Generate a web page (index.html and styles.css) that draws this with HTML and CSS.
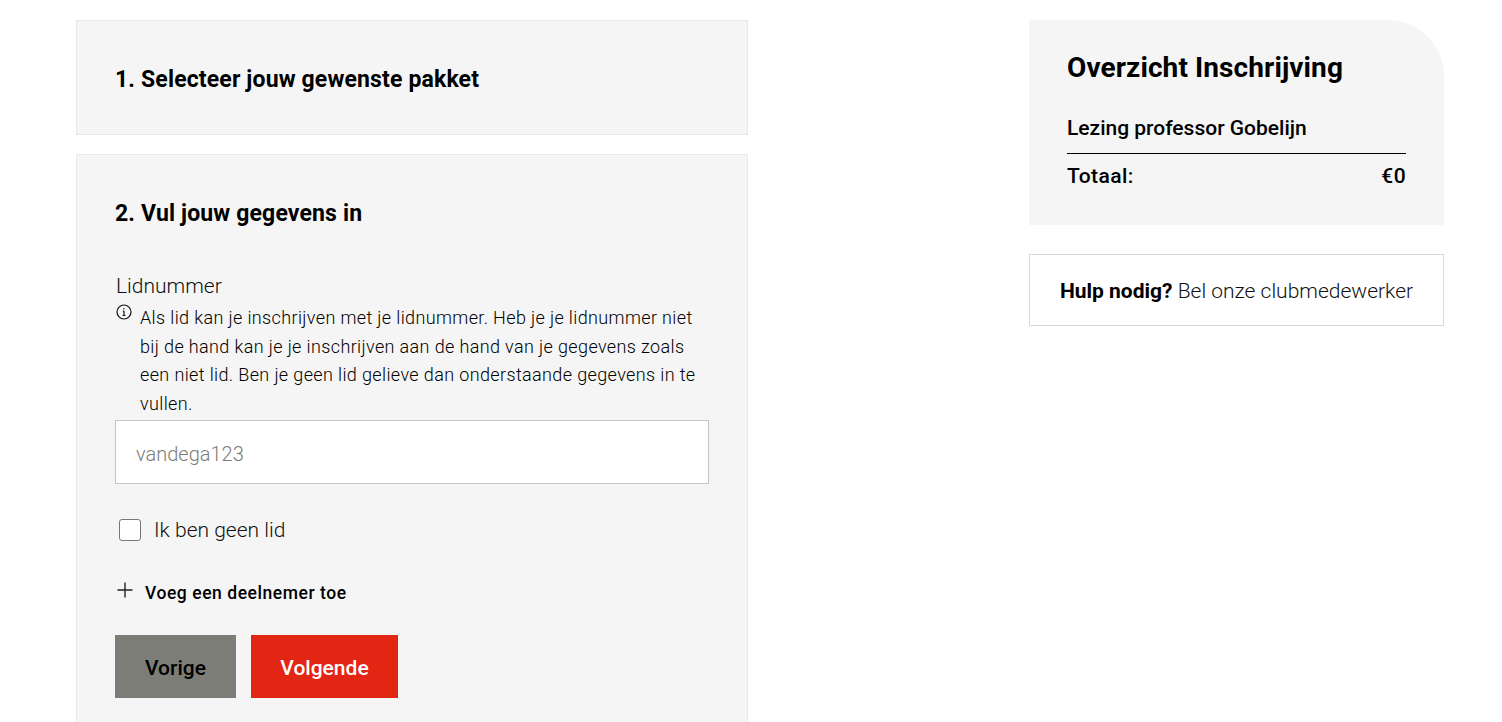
FILE: index.html
```html
<!DOCTYPE html>
<html lang="nl">
<head>
    <meta charset="UTF-8">
    <title>Inschrijving</title>
    <link rel="stylesheet" href="styles.css">
</head>
<body>

<div class="page">
    <main class="steps">
        <section class="card card-closed">
            <h2>1. Selecteer jouw gewenste pakket</h2>
        </section>

        <section class="card card-open">
            <h2>2. Vul jouw gegevens in</h2>

            <label class="field-label" for="lidnummer">Lidnummer</label>
            <div class="info">
                <svg class="info-icon" width="16" height="16" viewBox="0 0 16 16" fill="none" stroke="#111" stroke-width="1.2">
                    <circle cx="8" cy="8" r="7"/>
                    <path d="M8 7v4.5M6.6 11.5h2.8M6.8 7H8"/>
                    <circle cx="7.9" cy="4.7" r="0.7" fill="#111" stroke="none"/>
                </svg>
                <p>Als lid kan je inschrijven met je lidnummer. Heb je je lidnummer niet bij de hand kan je je inschrijven aan de hand van je gegevens zoals een niet lid. Ben je geen lid gelieve dan onderstaande gegevens in te vullen.</p>
            </div>
            <input class="text-input" id="lidnummer" type="text" placeholder="vandega123">

            <label class="check-row">
                <span class="check-box"></span>
                <span>Ik ben geen lid</span>
            </label>

            <a class="add-link" href="#">
                <svg width="18" height="18" viewBox="0 0 18 18" stroke="#222" stroke-width="1.4">
                    <path d="M9 1.500v15M1.500 9h15"/>
                </svg>
                <span>Voeg een deelnemer toe</span>
            </a>

            <div class="buttons">
                <button class="btn btn-grey">Vorige</button>
                <button class="btn btn-red">Volgende</button>
            </div>
        </section>
    </main>

    <aside class="side">
        <div class="summary">
            <h3>Overzicht Inschrijving</h3>
            <div class="summary-item">Lezing professor Gobelijn</div>
            <div class="summary-total">
                <span>Totaal:</span>
                <span>€0</span>
            </div>
        </div>
        <div class="help">
            <strong>Hulp nodig?</strong> Bel onze clubmedewerker
        </div>
    </aside>
</div>

</body>
</html>
```

FILE: styles.css
```css
html, body {
    margin: 0;
    height: 722px;
    overflow: hidden;
    background: #fff;
}

body {
    font-family: Roboto, "Liberation Sans", sans-serif;
    color: #111;
}

.page {
    display: flex;
    justify-content: space-between;
    width: 1368px;
    margin-left: 76px;
    padding-top: 20px;
}

.steps {
    width: 672px;
}

.card {
    box-sizing: border-box;
    background: #f5f5f5;
    border: 1px solid #e8e8e8;
    padding: 0 38px;
}

.card h2 {
    margin: 0;
    font-size: 23px;
    font-weight: 700;
    letter-spacing: 0.15px;
    color: #000;
}

.card-closed {
    height: 115px;
    margin-bottom: 19px;
    padding-top: 46px;
}

.card-closed h2 {
    line-height: 26px;
}

.card-open {
    height: 600px;
    padding-top: 46px;
}

.card-open h2 {
    line-height: 26px;
    margin-bottom: 46px;
}

.field-label {
    display: block;
    font-size: 21px;
    font-weight: 300;
    line-height: 26px;
    margin-left: 1px;
}

.info {
    display: flex;
    align-items: flex-start;
    width: 590px;
    margin-top: 5px;
}

.info-icon {
    flex: none;
    margin: 0 8px 0 1px;
}

.info p {
    margin: 0;
    font-size: 18px;
    font-weight: 300;
    line-height: 28.67px;
    letter-spacing: 0.37px;
    color: #000;
}

.text-input {
    display: block;
    box-sizing: border-box;
    width: 594px;
    height: 64px;
    margin-top: 1px;
    padding: 4px 20px 0;
    background: #fff;
    border: 1px solid #c4c4c4;
    font-family: inherit;
    font-size: 20px;
    font-weight: 300;
}

.text-input::placeholder {
    color: #7d7d78;
}

.check-row {
    display: flex;
    align-items: center;
    gap: 13px;
    margin: 35px 0 0 4px;
    font-size: 21px;
    font-weight: 300;
    line-height: 22px;
}

.check-box {
    box-sizing: border-box;
    width: 22px;
    height: 22px;
    background: #fff;
    border: 1px solid #777;
    border-radius: 3px;
}

.add-link {
    display: flex;
    align-items: center;
    gap: 11px;
    margin: 40px 0 0 1px;
    font-size: 17.500px;
    font-weight: 500;
    line-height: 24px;
    letter-spacing: 0.55px;
    color: #000;
    text-decoration: none;
}

.add-link svg {
    margin-top: -6px;
}

.buttons {
    display: flex;
    gap: 15px;
    margin-top: 30px;
}

.btn {
    height: 63px;
    border: none;
    padding: 3px 0 0;
    font-family: inherit;
    font-size: 21px;
    font-weight: 500;
}

.btn-grey {
    width: 121px;
    background: #7d7d78;
    color: #000;
}

.btn-red {
    width: 147px;
    background: #e32614;
    color: #fff;
}

.side {
    width: 415px;
}

.summary {
    box-sizing: border-box;
    height: 205px;
    background: #f5f5f5;
    border-top-right-radius: 56px;
    padding: 31px 38px 0;
}

.summary h3 {
    margin: 0 0 29px;
    font-size: 28px;
    font-weight: 700;
    line-height: 34px;
    letter-spacing: 0.1px;
    color: #000;
}

.summary-item {
    font-size: 21px;
    font-weight: 500;
    line-height: 28px;
    color: #000;
    padding-bottom: 11px;
    border-bottom: 1px solid #000;
}

.summary-total {
    display: flex;
    justify-content: space-between;
    margin-top: 8px;
    font-size: 21px;
    font-weight: 500;
    line-height: 28px;
    letter-spacing: 0.4px;
    color: #000;
}

.help {
    box-sizing: border-box;
    height: 72px;
    margin-top: 29px;
    background: #fff;
    border: 1px solid #d8d8d8;
    font-size: 21px;
    font-weight: 300;
    line-height: 72px;
    text-align: center;
    white-space: nowrap;
}

.help strong {
    font-weight: 700;
    color: #000;
}
```
